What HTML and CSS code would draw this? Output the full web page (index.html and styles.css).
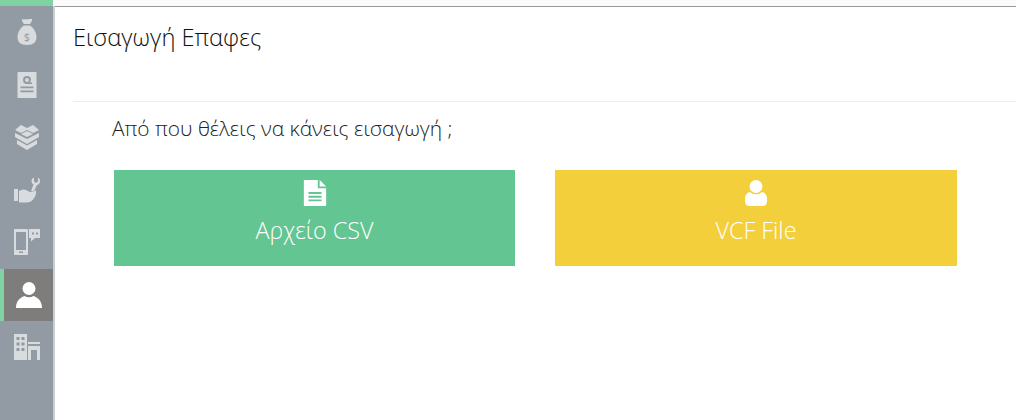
FILE: index.html
```html
<!DOCTYPE html>
<html lang="el">
<head>
  <meta charset="UTF-8" />
  <title>Εισαγωγή Επαφες</title>
  <link rel="stylesheet" href="styles.css">
</head>
<body>
  <div class="topbar">
    <div class="topbar-accent"></div>
  </div>
  <div class="layout">
    <nav class="sidebar">
      <a class="nav-item">
        <svg class="nav-icon" viewBox="0 0 26 26"><path d="M8 0c1.500.8 3 .2 5 .2s3.500-.6 5-.2c.6 1-.8 3.700-2 5H10C8.800 3.700 7.400 1 8 0zM10 6.500h6c4 2.500 6.500 7.500 6.500 11.500 0 5-3 8-9.500 8s-9.500-3-9.500-8c0-4 2.500-9 6.500-11.500z"/><text class="nav-dollar" x="13" y="21.500" text-anchor="middle">$</text></svg>
      </a>
      <a class="nav-item">
        <svg class="nav-icon" viewBox="0 0 26 26"><path fill-rule="evenodd" d="M4.500 0h17c.6 0 1 .5 1 1v24c0 .5-.4 1-1 1h-17c-.6 0-1-.5-1-1V1c0-.5.400-1 1-1zM13 4a4 4 0 0 0-4 4 4 4 0 0 0 4 4h5v-1.500h-2.200A4 4 0 0 0 17 8a4 4 0 0 0-4-4zm0 2a2 2 0 1 1 0 4 2 2 0 0 1 0-4zM6.500 14.500v1.800h13v-1.800zm0 4v1.800h13v-1.800z"/></svg>
      </a>
      <a class="nav-item">
        <svg class="nav-icon" viewBox="0 0 26 26"><path d="M1 6l6-5 6 3 6-3 6 5-6 3-6-3-6 3zM7 10l6-3 6 3-6 3zM1 9l12 6 12-6v4L13 20 1 13zM3 16l10 5.500L23 16v4l-10 6-10-6z"/></svg>
      </a>
      <a class="nav-item">
        <svg class="nav-icon" viewBox="0 0 26 26"><path d="M0 12h4v12H0zM5 14c3-1.500 5-2 7-1l4 2 3-.5 3-1c.5 2 0 4-1 6-1.500 3-4 6-8 6H5zM20 .5v4l2 1.500 2-1.500v-4c1.500.8 2 2.200 2 3.500 0 2-1 3.500-3 4l-3 6h-3l2.500-6.500c-1.500-1-2-2.500-2-3.500 0-1.300.7-2.700 2.500-3.500z"/></svg>
      </a>
      <a class="nav-item">
        <svg class="nav-icon" viewBox="0 0 26 26"><path fill-rule="evenodd" d="M1 0h12c.6 0 1 .4 1 1v24c0 .6-.4 1-1 1H1c-.6 0-1-.4-1-1V1c0-.6.400-1 1-1zM2 3v18h10V3zm3 19.500v1.500h4v-1.500zM15 0h11v9h-5l-4 3.500V9h-2zm3 3.500v2h2v-2zm4 0v2h2v-2z"/></svg>
      </a>
      <a class="nav-item nav-item-active">
        <svg class="nav-icon" viewBox="0 0 26 26"><circle cx="13" cy="6.500" r="6.500"/><path d="M0 26c0-6 3-10 8.500-12 2.800 1.700 6.200 1.700 9 0 5.500 2 8.500 6 8.500 12z"/></svg>
      </a>
      <a class="nav-item">
        <svg class="nav-icon" viewBox="0 0 26 26"><path fill-rule="evenodd" d="M0 0h13v26H0zM2.500 3v3h3V3zm5 0v3h3V3zm-5 5.500v3h3v-3zm5 0v3h3v-3zm-5 5.500v3h3v-3zm5 0v3h3v-3zM14 8h12v2H14zM14 12h12v14h-3V16h-6v10h-3z"/></svg>
      </a>
    </nav>
    <main class="content">
      <h1 class="page-title">Εισαγωγή Επαφες</h1>
      <hr class="divider">
      <p class="question">Από που θέλεις να κάνεις εισαγωγή ;</p>
      <div class="options">
        <a class="option option-csv">
          <svg class="option-icon" viewBox="0 0 24 28"><path fill-rule="evenodd" d="M0 0h15v9h9v19H0zM5 13v2h14v-2zm0 4v2h14v-2zm0 4v2h14v-2zM17 0l7 7h-7z"/></svg>
          <span class="option-label">Αρχείο CSV</span>
        </a>
        <a class="option option-vcf">
          <svg class="option-icon" viewBox="0 0 24 26"><circle cx="12" cy="6.500" r="6.500"/><path d="M6 12c3 3 9 3 12 0 3 .5 5 3 5 7v2c0 3-1.500 5-4.500 5h-13C2.500 26 1 24 1 21v-2c0-4 2-6.500 5-7z"/></svg>
          <span class="option-label">VCF File</span>
        </a>
      </div>
    </main>
  </div>
</body>
</html>
```

FILE: styles.css
```css
html, body {
  height: 100%;
}
body {
  margin: 0;
  font-family: "Open Sans", "Noto Sans", sans-serif;
  font-weight: 300;
  color: #333;
  background: #fff;
  overflow: hidden;
  display: flex;
  flex-direction: column;
}
.topbar {
  height: 6px;
  flex: none;
  background: #fafafa;
}
.topbar-accent {
  width: 53px;
  height: 6px;
  background: #7fd3a3;
}
.layout {
  flex: 1;
  display: flex;
}
.sidebar {
  width: 53px;
  flex: none;
  background: #929ba3;
  border-right: 2px solid #c9ced2;
  display: flex;
  flex-direction: column;
}
.nav-item {
  height: 52.5px;
  flex: none;
  display: flex;
  align-items: center;
  justify-content: center;
}
.nav-icon {
  width: 26px;
  height: 26px;
  fill: #d9dcdf;
}
.nav-dollar {
  font-family: "Open Sans", sans-serif;
  font-size: 11px;
  font-weight: 400;
  fill: #929ba3;
}
.nav-item-active {
  background: #7f7d7b;
  border-left: 4px solid #7fd3a3;
}
.nav-item-active .nav-icon {
  fill: #fff;
}
.content {
  flex: 1;
  min-width: 0;
  padding: 0 0 0 18px;
  border-top: 1px solid #999;
}
.page-title {
  margin: 0;
  padding-top: 15px;
  font-size: 23.7px;
  line-height: 30px;
  font-weight: 300;
  color: #111;
}
.divider {
  margin: 49px 0 0;
  border: 0;
  border-top: 1px solid #eee;
}
.question {
  margin: 12px 0 0 39px;
  font-size: 20.9px;
  line-height: 28px;
  color: #222;
}
.options {
  display: flex;
  gap: 40px;
  margin: 28px 0 0 41px;
}
.option {
  width: 401px;
  height: 96px;
  box-sizing: border-box;
  padding-top: 10px;
  display: flex;
  flex-direction: column;
  align-items: center;
  color: #fff;
}
.option-csv {
  background: #63c592;
}
.option-vcf {
  width: 402px;
  background: #f3cf3c;
}
.option-icon {
  width: 24px;
  height: 26px;
  fill: #fff;
}
.option-label {
  margin-top: 9px;
  font-size: 23.4px;
  line-height: 30px;
  font-weight: 300;
}
```
